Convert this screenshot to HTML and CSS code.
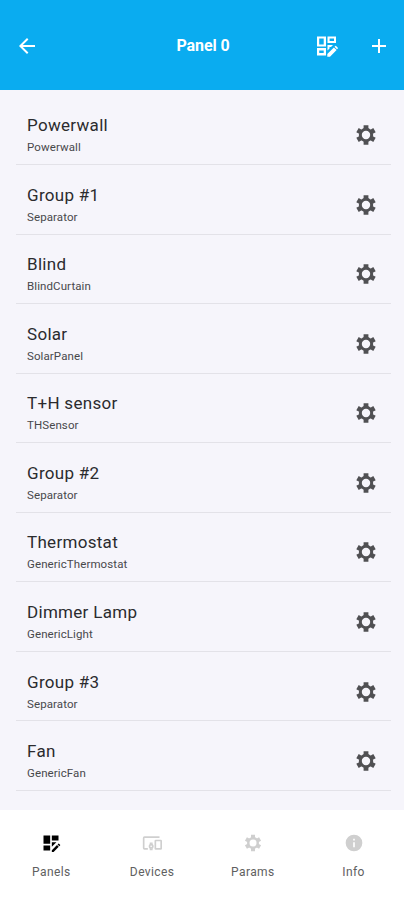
FILE: index.html
```html
<!DOCTYPE html>
<html lang="en">
<head>
<meta charset="utf-8">
<meta name="viewport" content="width=device-width, initial-scale=1">
<title>Panel 0</title>
<link rel="stylesheet" href="styles.css">
</head>
<body>

<svg class="sprite">
  <symbol id="gear" viewBox="0 0 24 24">
    <g fill="none" stroke="currentColor">
      <circle cx="12" cy="12" r="5.7" stroke-width="3"/>
      <path stroke-width="4.8" d="M12 2.2V6 M12 18v3.8 M3.5 7.1L6.8 9 M17.2 15l3.3 1.9 M3.5 16.9L6.8 15 M17.2 9l3.3-1.9"/>
    </g>
  </symbol>
</svg>

<div class="app">

<header class="topbar">
  <button class="iconbtn back" aria-label="Back">
    <svg width="24" height="24" viewBox="0 0 24 24"><path d="M20 11H7.83l5.59-5.59L12 4l-8 8 8 8 1.41-1.41L7.83 13H20z"/></svg>
  </button>
  <h1>Panel 0</h1>
  <button class="iconbtn edit" aria-label="Edit">
    <svg width="24" height="24" viewBox="0 0 24 24">
      <path fill-rule="evenodd" d="M3 2.500h9v10H3z M5.200 4.600v5.800h4.500V4.600z"/>
      <path fill-rule="evenodd" d="M13.500 2.500H22v6.500h-8.500z M15.600 4.600v2.300H20V4.600z"/>
      <path fill-rule="evenodd" d="M3 14h9v7.500H3z M5.200 16.500v2.500h4.500v-2.500z"/>
      <path d="M13.500 11H19l-2 2h-1.500v1.500l-2 2z"/>
      <path d="M13.300 20l6.600-6.600 2.700 2.700-6.600 6.600h-2.700z M20.500 12.800l.8-.8q.4-.4.8 0l1.700 1.700q.4.4 0 .8l-.8.8z"/>
    </svg>
  </button>
  <button class="iconbtn" aria-label="Add">
    <svg width="24" height="24" viewBox="0 0 24 24"><path d="M19 13h-6v6h-2v-6H5v-2h6V5h2v6h6z"/></svg>
  </button>
</header>

<ul class="list">
  <li>
    <div class="label"><h2>Powerwall</h2><p>Powerwall</p></div>
    <svg class="gear"><use href="#gear"/></svg>
  </li>
  <li>
    <div class="label"><h2>Group #1</h2><p>Separator</p></div>
    <svg class="gear"><use href="#gear"/></svg>
  </li>
  <li>
    <div class="label"><h2>Blind</h2><p>BlindCurtain</p></div>
    <svg class="gear"><use href="#gear"/></svg>
  </li>
  <li>
    <div class="label"><h2>Solar</h2><p>SolarPanel</p></div>
    <svg class="gear"><use href="#gear"/></svg>
  </li>
  <li>
    <div class="label"><h2>T+H sensor</h2><p>THSensor</p></div>
    <svg class="gear"><use href="#gear"/></svg>
  </li>
  <li>
    <div class="label"><h2>Group #2</h2><p>Separator</p></div>
    <svg class="gear"><use href="#gear"/></svg>
  </li>
  <li>
    <div class="label"><h2>Thermostat</h2><p>GenericThermostat</p></div>
    <svg class="gear"><use href="#gear"/></svg>
  </li>
  <li>
    <div class="label"><h2>Dimmer Lamp</h2><p>GenericLight</p></div>
    <svg class="gear"><use href="#gear"/></svg>
  </li>
  <li>
    <div class="label"><h2>Group #3</h2><p>Separator</p></div>
    <svg class="gear"><use href="#gear"/></svg>
  </li>
  <li>
    <div class="label"><h2>Fan</h2><p>GenericFan</p></div>
    <svg class="gear"><use href="#gear"/></svg>
  </li>
</ul>

<nav class="tabs">
  <a class="active">
    <svg viewBox="0 0 24 24">
      <path d="M3 3h8v10H3z M13 3h8v6h-8z M3 15h8v6H3z M13 11h5.5L13 16.5z"/>
      <path d="M13 20.6l6.2-6.2 2.1 2.1-6.2 6.2H13z M19.9 13.7l.9-.9q.4-.4.8 0l1.3 1.3q.4.4 0 .8l-.9.9z"/>
    </svg>
    <span>Panels</span>
  </a>
  <a>
    <svg viewBox="0 0 24 24">
      <g fill="none" stroke="currentColor" stroke-width="2">
        <path d="M21 5H3Q2 5 2 6v12q0 1 1 1h4"/>
        <rect x="16" y="9" width="7" height="10" rx="0.5"/>
        <circle cx="11" cy="16" r="2"/>
        <path d="M10 14v-2h2v2 M10 18v2h2v-2" stroke-width="1.5"/>
      </g>
    </svg>
    <span>Devices</span>
  </a>
  <a>
    <svg><use href="#gear"/></svg>
    <span>Params</span>
  </a>
  <a>
    <svg viewBox="0 0 24 24"><path fill-rule="evenodd" d="M12 2a10 10 0 1 0 0 20a10 10 0 1 0 0-20z M11 11h2v6h-2z M11 7h2v2h-2z"/></svg>
    <span>Info</span>
  </a>
</nav>

</div>
</body>
</html>
```
FILE: styles.css
```css
body {
  margin: 0;
  font-family: Roboto, sans-serif;
  background-color: #f6f5fb;
}

.sprite {
  display: none;
}

.app {
  display: flex;
  flex-direction: column;
  height: 900px;
  overflow: hidden;
}

/* Top bar */
.topbar {
  display: flex;
  align-items: center;
  height: 90px;
  padding: 1px 13px 0 15px;
  box-sizing: border-box;
  background-color: #0aacf0;
  color: #ffffff;
}

.topbar h1 {
  flex: 1;
  margin: 0;
  padding-left: 53px;
  text-align: center;
  font-size: 16px;
  font-weight: 700;
  letter-spacing: -0.1px;
}

.iconbtn {
  display: flex;
  padding: 0;
  border: none;
  background: none;
  cursor: pointer;
}

.iconbtn svg {
  fill: #ffffff;
}

.edit {
  margin-right: 29px;
}

/* List of panel items */
.list {
  flex: 1;
  margin: 0;
  padding: 5.5px 13px 0 16px;
  list-style: none;
}

.list li {
  display: flex;
  align-items: center;
  justify-content: space-between;
  height: 69.55px;
  padding: 9.8px 13px 0 11px;
  box-sizing: border-box;
  border-bottom: 1px solid #e3e2e8;
}

.label h2 {
  margin: 0;
  font-size: 17px;
  font-weight: 400;
  line-height: 22px;
  letter-spacing: 0.3px;
  color: #2b2b2e;
}

.label p {
  margin: 3px 0 0;
  font-size: 11.5px;
  line-height: 16px;
  letter-spacing: 0.1px;
  color: #48484b;
}

.gear {
  width: 24px;
  height: 24px;
  margin-top: 1px;
  color: #505053;
}

/* Bottom tabs */
.tabs {
  display: flex;
  height: 90px;
  padding-left: 1px;
  background-color: #ffffff;
}

.tabs a {
  flex: 1;
  display: flex;
  flex-direction: column;
  align-items: center;
  padding-top: 23px;
  font-size: 12px;
  letter-spacing: 0.4px;
  color: #606060;
}

.tabs svg {
  width: 20px;
  height: 20px;
  fill: #cfcfcf;
  color: #cfcfcf;
}

.tabs .active svg {
  fill: #000000;
}

.tabs span {
  margin-top: 11px;
  line-height: 16px;
}
```
